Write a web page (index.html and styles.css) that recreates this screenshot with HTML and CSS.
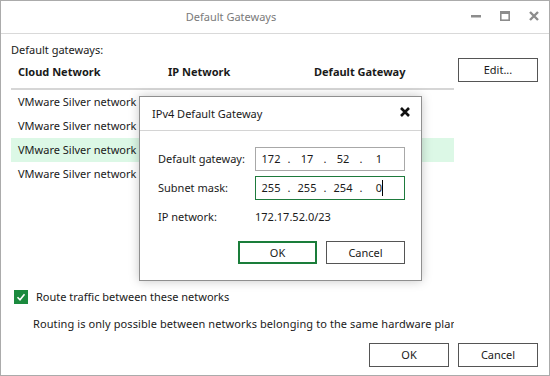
FILE: index.html
```html
<!DOCTYPE html>
<html>
<head>
<meta charset="utf-8">
<link rel="stylesheet" href="styles.css">
</head>
<body>
<div class="window">
  <div class="titlebar">
    <div class="title">Default Gateways</div>
    <div class="controls">
      <svg class="ctl" width="10" height="10" viewBox="0 0 10 10"><rect x="0" y="4" width="10" height="2.5" fill="#8c8c8c"/></svg>
      <svg class="ctl" width="10" height="10" viewBox="0 0 10 10"><rect x="0.8" y="0.8" width="8.4" height="8.4" fill="none" stroke="#8c8c8c" stroke-width="1.6"/><rect x="0" y="0" width="10" height="3" fill="#8c8c8c"/></svg>
      <svg class="ctl" width="10" height="10" viewBox="0 0 10 10"><path d="M1 1 L9 9 M9 1 L1 9" stroke="#8c8c8c" stroke-width="2.4" fill="none"/></svg>
    </div>
  </div>
  <div class="body">
    <div class="label">Default gateways:</div>
    <div class="main-row">
      <div class="grid">
        <div class="grid-head">
          <span class="col c1">Cloud Network</span>
          <span class="col c2">IP Network</span>
          <span class="col c3">Default Gateway</span>
        </div>
        <div class="grid-row"><span class="col c1">VMware Silver network</span></div>
        <div class="grid-row"><span class="col c1">VMware Silver network</span></div>
        <div class="grid-row selected"><span class="col c1">VMware Silver network</span></div>
        <div class="grid-row"><span class="col c1">VMware Silver network</span></div>
      </div>
      <button class="btn edit">Edit...</button>
    </div>
    <div class="bottom">
      <div class="check-row">
        <span class="checkbox"><svg width="14" height="14" viewBox="0 0 14 14"><path d="M3.5 7.2 L6 9.7 L10.5 4.3" stroke="#fff" stroke-width="1.6" fill="none"/></svg></span>
        <span>Route traffic between these networks</span>
      </div>
      <div class="note">Routing is only possible between networks belonging to the same hardware plan</div>
      <div class="footer">
        <button class="btn">OK</button>
        <button class="btn">Cancel</button>
      </div>
    </div>
  </div>

  <div class="modal">
    <div class="modal-head">
      <span class="modal-title">IPv4 Default Gateway</span>
      <svg class="modal-close" width="10" height="10" viewBox="0 0 10 10"><path d="M1 1 L9 9 M9 1 L1 9" stroke="#111" stroke-width="2.6" fill="none"/></svg>
    </div>
    <div class="modal-body">
      <div class="field">
        <span class="flabel">Default gateway:</span>
        <div class="ip">
          <span class="oct">172</span><span class="dot">.</span><span class="oct">17</span><span class="dot">.</span><span class="oct">52</span><span class="dot">.</span><span class="oct">1</span>
        </div>
      </div>
      <div class="field">
        <span class="flabel">Subnet mask:</span>
        <div class="ip focused">
          <span class="oct">255</span><span class="dot">.</span><span class="oct">255</span><span class="dot">.</span><span class="oct">254</span><span class="dot">.</span><span class="oct">0<span class="caret"></span></span>
        </div>
      </div>
      <div class="field info">
        <span class="flabel">IP network:</span>
        <span class="fvalue">172.17.52.0/23</span>
      </div>
      <div class="modal-buttons">
        <button class="btn primary">OK</button>
        <button class="btn">Cancel</button>
      </div>
    </div>
  </div>
</div>
</body>
</html>
```
FILE: styles.css
```css
* { box-sizing: border-box; }
html, body { margin: 0; padding: 0; background: #fff; }
body {
  font-family: "Noto Sans", "Open Sans", sans-serif;
  font-size: 11px;
  color: #1a1a1a;
  line-height: 16px;
}
.window {
  position: relative;
  width: 550px;
  height: 376px;
  border: 1px solid #ababab;
  background: #fff;
  display: flex;
  flex-direction: column;
  overflow: hidden;
}
.titlebar {
  height: 33px;
  flex: none;
  border-bottom: 1px solid #d9d9d9;
  display: flex;
  align-items: center;
}
.title {
  flex: 1;
  text-align: center;
  color: #7a7a7a;
}
.controls {
  display: flex;
  gap: 19px;
  padding: 0 10px 0 10px;
  align-items: center;
  margin-top: -2px;
}
.ctl { display: block; }
.body {
  flex: 1;
  display: flex;
  flex-direction: column;
  padding: 8px 11px 8px 10px;
}
.label { height: 16px; }
.main-row {
  display: flex;
  align-items: flex-start;
  gap: 4px;
}
.grid { width: 443px; }
.grid-head {
  display: flex;
  font-weight: bold;
  padding: 6px 0 8px;
  border-bottom: 2px solid #d6d6d6;
}
.col { padding-left: 7px; white-space: nowrap; }
.c1 { width: 150px; }
.c2 { width: 146px; }
.c3 { flex: 1; }
.grid-row {
  display: flex;
  height: 24px;
  align-items: center;
}
.grid-row.selected { background: #dcf8e6; }
.btn {
  font: inherit;
  color: #1a1a1a;
  background: #fff;
  border: 1px solid #555;
  width: 80px;
  height: 24px;
  padding: 0;
  line-height: 16px;
}
.edit { flex: none; }
.bottom {
  margin-top: auto;
  display: flex;
  flex-direction: column;
}
.check-row {
  display: flex;
  align-items: center;
  gap: 8px;
  height: 16px;
  padding-left: 3px;
}
.checkbox {
  width: 14px;
  height: 14px;
  background: #1b8a3e;
  display: block;
}
.checkbox svg { display: block; }
.note {
  width: 443px;
  margin-top: 11px;
  padding-left: 22px;
  white-space: nowrap;
  overflow: hidden;
  letter-spacing: 0.09px;
}
.footer {
  margin-top: 11px;
  display: flex;
  justify-content: flex-end;
  gap: 9px;
}

.modal {
  position: absolute;
  left: 138px;
  top: 95px;
  width: 283px;
  height: 185px;
  background: #fff;
  border: 1px solid #8f8f8f;
  box-shadow: 0 0 10px rgba(0,0,0,0.22);
  display: flex;
  flex-direction: column;
}
.modal-head {
  height: 34px;
  border-bottom: 1px solid #d4d4d4;
  display: flex;
  align-items: center;
  justify-content: space-between;
  padding: 0 11px 0 12px;
}
.modal-close { display: block; margin-top: -3px; }
.modal-body {
  padding: 16px 16px 0 18px;
  display: flex;
  flex-direction: column;
}
.field {
  display: flex;
  align-items: center;
  height: 24px;
}
.field + .field { margin-top: 5px; }
.field.info { height: 16px; margin-top: 9px; }
.flabel { width: 97px; flex: none; }
.ip {
  width: 150px;
  height: 24px;
  border: 1px solid #a8a8a8;
  display: flex;
  align-items: center;
  padding-left: 3px;
}
.ip.focused { border-color: #1e7a3c; }
.oct { width: 24px; text-align: center; position: relative; }
.dot { width: 12px; text-align: center; }
.caret {
  position: absolute;
  top: 0;
  width: 1px;
  height: 16px;
  background: #000;
}
.modal-buttons {
  margin-top: 16px;
  display: flex;
  justify-content: flex-end;
  gap: 9px;
}
.modal-buttons .btn { width: 79px; height: 23px; }
.btn.primary { border: 2px solid #1a7d3a; }
```
